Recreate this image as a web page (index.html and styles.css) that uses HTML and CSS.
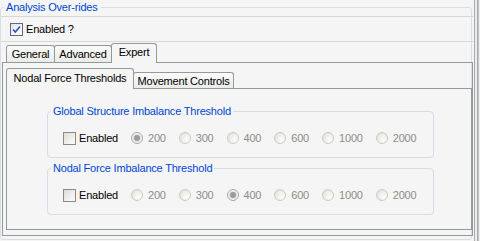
FILE: index.html
```html
<!DOCTYPE html>
<html>
<head>
<meta charset="utf-8">
<link rel="stylesheet" href="styles.css">
</head>
<body>
<div class="main">
  <fieldset class="outer">
    <legend class="title">Analysis Over-rides</legend>
    <div class="enable-row">
      <span class="cb checked"><svg width="11" height="11" viewBox="0 0 11 11"><path d="M2 5.5 L4.3 8 L9 2.5" fill="none" stroke="#2f52c2" stroke-width="1.6"/></svg></span>
      <span>Enabled ?</span>
    </div>
    <div class="tabs">
      <div class="tab w-general">General</div>
      <div class="tab w-advanced">Advanced</div>
      <div class="tab active w-expert">Expert</div>
    </div>
    <div class="pane">
      <div class="tabs inner">
        <div class="tab active w-nodal">Nodal Force Thresholds</div>
        <div class="tab w-movement">Movement Controls</div>
      </div>
      <div class="pane inner-pane">
        <fieldset class="group">
          <legend class="title">Global Structure Imbalance Threshold</legend>
          <div class="row">
            <span class="cb"></span>
            <span class="label">Enabled</span>
            <span class="opt"><span class="radio on"></span><span class="val">200</span></span>
            <span class="opt"><span class="radio"></span><span class="val">300</span></span>
            <span class="opt"><span class="radio"></span><span class="val">400</span></span>
            <span class="opt"><span class="radio"></span><span class="val">600</span></span>
            <span class="opt"><span class="radio"></span><span class="val">1000</span></span>
            <span class="opt"><span class="radio"></span><span class="val">2000</span></span>
          </div>
        </fieldset>
        <fieldset class="group second">
          <legend class="title">Nodal Force Imbalance Threshold</legend>
          <div class="row">
            <span class="cb"></span>
            <span class="label">Enabled</span>
            <span class="opt"><span class="radio"></span><span class="val">200</span></span>
            <span class="opt"><span class="radio"></span><span class="val">300</span></span>
            <span class="opt"><span class="radio on"></span><span class="val">400</span></span>
            <span class="opt"><span class="radio"></span><span class="val">600</span></span>
            <span class="opt"><span class="radio"></span><span class="val">1000</span></span>
            <span class="opt"><span class="radio"></span><span class="val">2000</span></span>
          </div>
        </fieldset>
      </div>
    </div>
  </fieldset>
</div>
<div class="edge"></div>
</body>
</html>
```

FILE: styles.css
```css
* { box-sizing: border-box; }
html, body { margin: 0; padding: 0; }
body {
  width: 480px;
  height: 241px;
  overflow: hidden;
  background: #f5f5f5;
  font-family: "Liberation Sans", Arial, sans-serif;
  font-size: 11px;
  letter-spacing: -0.2px;
  color: #000;
  display: flex;
}
.main {
  width: 474px;
  height: 241px;
  display: flex;
  flex-direction: column;
}
.edge {
  width: 6px;
  height: 241px;
  background: linear-gradient(to right, #a9abb3 0 1px, #ececec 1px 3px, #a9abb3 3px 4px, #c6c6c6 4px 5px, #eeeeee 5px 6px);
}
fieldset.outer {
  margin: 0 2px 0 0;
  padding: 0 0 3px 0;
  border: 1px solid #d7dfe9;
  border-radius: 3px;
  min-width: 0;
}
legend.title {
  color: #0046d5;
  padding: 0 2px;
  margin-left: 3px;
  line-height: 15px;
  height: 15px;
}
.enable-row {
  margin: 1px -2px 0 0;
  height: 26px;
  border-top: 1px solid #d9d9d3;
  border-bottom: 1px solid #d9d9d3;
  display: flex;
  align-items: center;
  gap: 3px;
  padding-left: 9px;
}
.cb {
  width: 13px;
  height: 13px;
  border: 1px solid #8a8a8a;
  background: linear-gradient(135deg, #dcdcd8 0%, #f0f0ee 60%, #fbfbfb 100%);
  display: inline-flex;
  align-items: center;
  justify-content: center;
  flex: none;
}
.cb.checked {
  border-color: #5a6b8c;
  background: linear-gradient(135deg, #e4e4e0 0%, #f6f6f4 60%, #ffffff 100%);
}
.tabs {
  height: 20px;
  display: flex;
  align-items: flex-end;
  padding-left: 5px;
  margin-right: -2px;
  position: relative;
  z-index: 1;
}
.tab {
  height: 17px;
  border: 1px solid #939a9c;
  border-bottom: none;
  border-radius: 3px 3px 0 0;
  background: linear-gradient(#fbfbfb, #ebebe8);
  display: flex;
  align-items: center;
  justify-content: center;
  white-space: nowrap;
  flex: none;
}
.tab.active {
  height: 20px;
  margin-bottom: -1px;
  background: #f5f5f5;
  border-color: #939a9c;
  align-items: flex-start;
  padding-top: 2px;
}
.w-general { width: 49px; }
.w-advanced { width: 58px; margin-left: -1px; }
.w-expert { width: 46px; margin-left: -1px; }
.pane {
  margin: 0 -2px 0 1px;
  height: 174px;
  border: 1px solid #939a9c;
  padding: 5px 0 5px 3px;
  display: flex;
  flex-direction: column;
}
.tabs.inner {
  padding-left: 0;
  margin-right: 0;
}
.tabs.inner .tab { height: 16px; }
.tabs.inner .tab.active { height: 21px; padding-top: 3px; }
.w-nodal { width: 128px; }
.w-movement { width: 101px; margin-left: -1px; }
.inner-pane {
  margin: 0;
  height: 142px;
  padding: 15px 0 0 40px;
  display: flex;
  flex-direction: column;
}
fieldset.group {
  width: 387px;
  margin: 0;
  padding: 0;
  border: 1px solid #d5dde8;
  border-radius: 4px;
  min-width: 0;
}
fieldset.group legend.title {
  line-height: 14px;
  height: 14px;
}
fieldset.group.second { margin-top: 3px; }
.row {
  height: 16px;
  margin: 12px 0 11px 15px;
  display: flex;
  align-items: center;
}
.row .label { margin-left: 3px; margin-right: 13px; }
.opt {
  display: flex;
  align-items: center;
  gap: 5px;
  margin-right: 13px;
  color: #8c8c8c;
}
.radio {
  width: 12px;
  height: 12px;
  border-radius: 50%;
  border: 1px solid #cbcbc5;
  background: radial-gradient(circle at 70% 70%, #fcfcfc 0%, #eeeeea 50%, #dcdcd6 100%);
  display: flex;
  align-items: center;
  justify-content: center;
  flex: none;
}
.radio.on {
  border-color: #a8a8a6;
  background: #f4f4f2;
}
.radio.on::after {
  content: "";
  width: 6px;
  height: 6px;
  border-radius: 50%;
  background: #9c9c9a;
  box-shadow: 0 0 0 1px #e0e0de;
}
```
